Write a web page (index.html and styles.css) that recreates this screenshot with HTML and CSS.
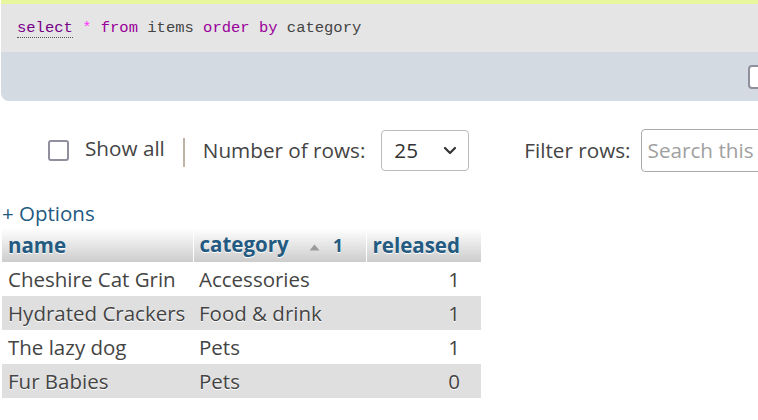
FILE: index.html
```html
<!DOCTYPE html>
<html>
<head>
<meta charset="utf-8">
<link rel="stylesheet" href="styles.css">
</head>
<body>
<div class="sqlbox">
  <div class="sqlcode"><span class="kw-main">select</span> <span class="star">*</span> <span class="kw">from</span> <span class="id">items</span> <span class="kw">order</span> <span class="kw">by</span> <span class="id">category</span></div>
  <div class="sqltools"><span class="tool-check"></span></div>
</div>
<div class="nav">
  <label class="showall"><span class="check"></span><span>Show all</span></label>
  <span class="sep"></span>
  <span class="lbl">Number of rows:</span>
  <div class="select"><span>25</span>
    <svg class="chev" width="14" height="9" viewBox="0 0 14 9"><path d="M2 2 L7 7 L12 2" fill="none" stroke="#333" stroke-width="2.2" stroke-linecap="round" stroke-linejoin="round"/></svg>
  </div>
  <span class="lbl filter">Filter rows:</span>
  <div class="search">Search this</div>
</div>
<a class="options">+ Options</a>
<table class="data">
  <colgroup><col class="w1"><col class="w2"><col class="w3"></colgroup>
  <thead>
    <tr><th>name</th><th>category <span class="sort"><svg width="11" height="7" viewBox="0 0 11 7"><path d="M5.5 0.5 L10.5 6.5 L0.5 6.5 Z" fill="#9a9a9a"/></svg></span><span class="sortn">1</span></th><th>released</th></tr>
  </thead>
  <tbody>
    <tr><td>Cheshire Cat Grin</td><td>Accessories</td><td class="num">1</td></tr>
    <tr class="odd"><td>Hydrated Crackers</td><td>Food &amp; drink</td><td class="num">1</td></tr>
    <tr><td>The lazy dog</td><td>Pets</td><td class="num">1</td></tr>
    <tr class="odd"><td>Fur Babies</td><td>Pets</td><td class="num">0</td></tr>
  </tbody>
</table>
</body>
</html>
```
FILE: styles.css
```css
html, body { margin: 0; padding: 0; background: #fff; }
body { font-family: "Open Sans", "Noto Sans", sans-serif; color: #444; overflow: hidden; width: 758px; height: 420px; }

.sqlbox { margin-left: 1px; border-top: 4px solid #e8f79e; border-bottom-left-radius: 8px; overflow: hidden; }
.sqlcode { background: #e5e5e5; height: 48px; box-sizing: border-box; padding: 14px 0 0 16px; font-family: "Liberation Mono", monospace; font-size: 15.5px; line-height: 20px; color: #444; white-space: nowrap; }
.kw-main { color: #770088; border-bottom: 1px dotted #555; }
.star { color: #ff33ff; }
.kw { color: #990099; }
.id { color: #444; }
.sqltools { background: #d3dae1; height: 49px; display: flex; justify-content: flex-end; align-items: center; }
.tool-check { width: 18px; height: 20px; border: 2px solid #8f8f9d; border-radius: 4px; background: #fff; margin-right: -12px; }

.nav { display: flex; align-items: center; height: 44px; margin-top: 27px; padding-left: 48px; font-size: 20.7px; white-space: nowrap; overflow: hidden; }
.nav > * { flex-shrink: 0; }
.showall { display: flex; align-items: center; }
.check { width: 17px; height: 17px; border: 2px solid #8f8f9d; border-radius: 3px; background: #fff; margin-right: 16px; flex-shrink: 0; }
.showall span:last-child { position: relative; top: -2px; }
.sep { width: 2px; height: 29px; background: #bfb3a6; margin: 4px 18px 0 18px; }
.lbl { color: #444; }
.select { width: 88px; height: 41px; box-sizing: border-box; border: 1px solid #bbb; border-radius: 4px; margin-left: 16px; display: flex; align-items: center; justify-content: space-between; padding: 0 11px 0 12px; color: #333; }
.filter { margin-left: 55px; }
.search { margin-left: 10px; height: 43px; width: 200px; box-sizing: border-box; border: 1px solid #aaa; border-radius: 4px; padding: 0 6px; display: flex; align-items: center; color: #a0a0a0; }

.options { display: block; margin: 29px 0 0 2px; color: #235a81; font-size: 20.5px; line-height: 24px; }

.data { margin-left: 2px; margin-top: 3px; border-collapse: collapse; font-size: 20.5px; table-layout: fixed; width: 479px; }
.w1 { width: 191px; }
.w2 { width: 173px; }
.w3 { width: 115px; }
.data th { text-align: left; color: #235a81; font-weight: bold; background: linear-gradient(#ffffff, #cccccc); height: 34px; box-sizing: border-box; padding: 0 6px; text-shadow: 0 1px 0 #fff; border-right: 1px solid #fff; white-space: nowrap; line-height: 24px; }
.data th:last-child { border-right: 0; }
.sort { display: inline-block; margin-left: 15px; vertical-align: middle; position: relative; top: -3px; }
.sortn { font-size: 17.5px; margin-left: 13px; }
.data td { padding: 0 6px; height: 34px; white-space: nowrap; text-shadow: 0 1px 0 #fff; line-height: 24px; }
.data tr.odd td { background: #dfdfdf; }
.data td.num { text-align: right; padding-right: 21px; }
```
